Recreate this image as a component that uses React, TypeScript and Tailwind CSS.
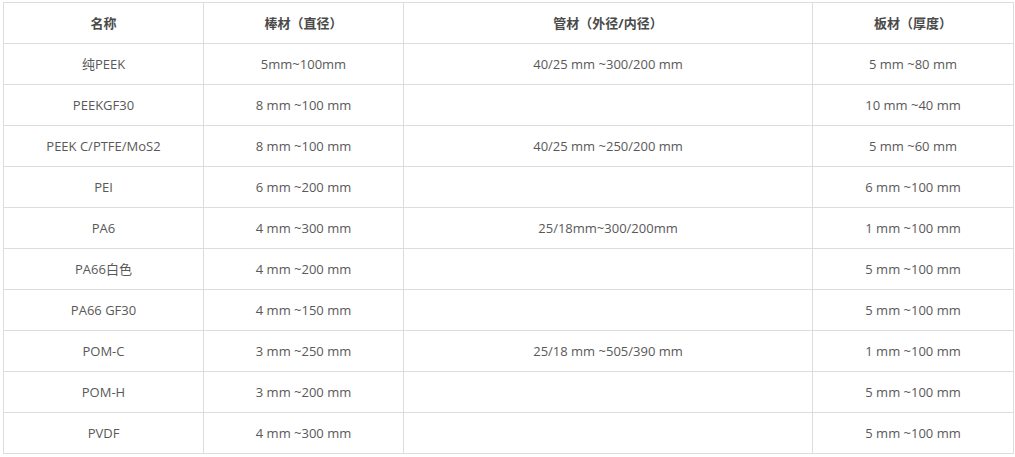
import React from "react";

const rows: [string, string, string, string][] = [
  ["纯PEEK", "5mm~100mm", "40/25 mm ~300/200 mm", "5 mm ~80 mm"],
  ["PEEKGF30", "8 mm ~100 mm", "", "10 mm ~40 mm"],
  ["PEEK C/PTFE/MoS2", "8 mm ~100 mm", "40/25 mm ~250/200 mm", "5 mm ~60 mm"],
  ["PEI", "6 mm ~200 mm", "", "6 mm ~100 mm"],
  ["PA6", "4 mm ~300 mm", "25/18mm~300/200mm", "1 mm ~100 mm"],
  ["PA66白色", "4 mm ~200 mm", "", "5 mm ~100 mm"],
  ["PA66 GF30", "4 mm ~150 mm", "", "5 mm ~100 mm"],
  ["POM-C", "3 mm ~250 mm", "25/18 mm ~505/390 mm", "1 mm ~100 mm"],
  ["POM-H", "3 mm ~200 mm", "", "5 mm ~100 mm"],
  ["PVDF", "4 mm ~300 mm", "", "5 mm ~100 mm"],
];

const headers = ["名称", "棒材（直径）", "管材（外径/内径）", "板材（厚度）"];

export default function App() {
  return (
    <div className="bg-white w-[1015px] h-[457px] pt-[2px] pl-[3px] font-['Open_Sans','Noto_Sans_CJK_SC',sans-serif]">
      <table className="border-collapse table-fixed w-[1010px] text-[13px] text-[#595959]">
        <colgroup>
          <col className="w-[200px]" />
          <col className="w-[200px]" />
          <col className="w-[409px]" />
          <col className="w-[201px]" />
        </colgroup>
        <thead>
          <tr>
            {headers.map((h) => (
              <th
                key={h}
                className="border border-[#ddd] h-[41px] p-0 pt-[2px] text-center font-bold text-[#4a4a4a]"
              >
                {h}
              </th>
            ))}
          </tr>
        </thead>
        <tbody>
          {rows.map((r) => (
            <tr key={r[0]}>
              {r.map((c, i) => (
                <td
                  key={i}
                  className="border border-[#ddd] h-[41px] p-0 pt-[2px] text-center"
                >
                  {c}
                </td>
              ))}
            </tr>
          ))}
        </tbody>
      </table>
    </div>
  );
}
